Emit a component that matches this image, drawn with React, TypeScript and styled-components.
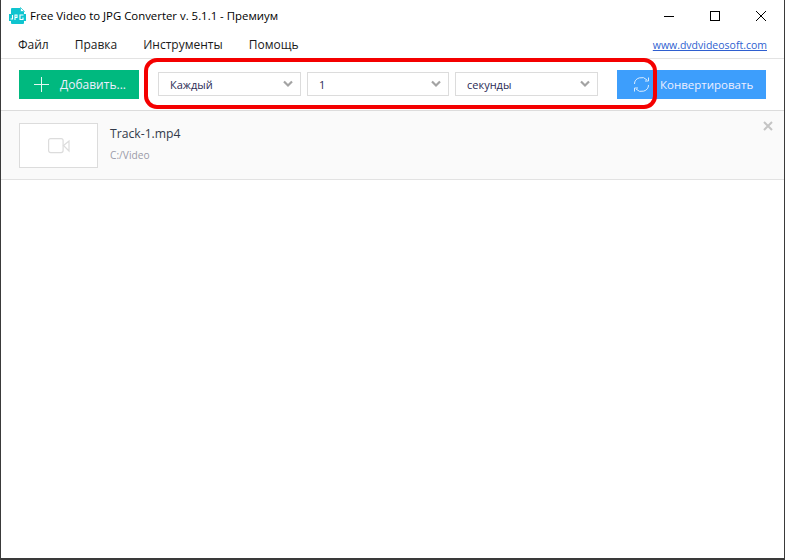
import React from "react";
import styled, { createGlobalStyle } from "styled-components";

const Global = createGlobalStyle`
  html, body { margin: 0; padding: 0; background: #fff; }
  body { font-family: "Open Sans", "Noto Sans", sans-serif; }
`;

const Window = styled.div`
  position: relative;
  box-sizing: border-box;
  width: 785px;
  height: 560px;
  border: solid #3a3a3a;
  border-width: 0 1px 2px 1px;
  background: #fff;
  overflow: hidden;
`;

const TitleBar = styled.div`
  display: flex;
  align-items: center;
  height: 31px;
  padding-left: 8px;
`;

const TitleText = styled.div`
  margin-left: 4px;
  font-size: 11.4px;
  color: #000;
  flex: 1;
  white-space: nowrap;
`;

const WinButton = styled.div`
  width: 46px;
  height: 31px;
  display: flex;
  align-items: center;
  justify-content: center;
`;

const MenuBar = styled.div`
  display: flex;
  align-items: center;
  height: 27px;
  padding: 0 17px;
  gap: 26px;
`;

const MenuItem = styled.span`
  font-size: 12px;
  color: #1a1a1a;
`;

const SiteLink = styled.a`
  margin-left: auto;
  font-size: 10.5px;
  color: #2f5fd0;
  text-decoration: underline;
`;

const Toolbar = styled.div`
  display: flex;
  align-items: center;
  height: 53px;
  box-sizing: border-box;
  border-top: 1px solid #e3e3e3;
  border-bottom: 1px solid #dcdcdc;
  padding: 0 18px;
`;

const ActionButton = styled.div<{ $bg: string; $w: number; $fs: number }>`
  display: flex;
  align-items: center;
  box-sizing: border-box;
  width: ${(p) => p.$w}px;
  height: 29px;
  background: ${(p) => p.$bg};
  color: #eef;
  font-size: ${(p) => p.$fs}px;
  white-space: nowrap;
`;

const GreenInner = styled.span`
  display: flex;
  align-items: center;
  gap: 10px;
  padding-left: 14px;
`;

const BlueInner = styled.span`
  display: flex;
  align-items: center;
  gap: 10px;
  padding-left: 16px;
`;

const Selects = styled.div`
  display: flex;
  gap: 6px;
  margin: 0 19px 1px;
`;

const Select = styled.div<{ $w: number }>`
  display: flex;
  align-items: center;
  justify-content: space-between;
  box-sizing: border-box;
  width: ${(p) => p.$w}px;
  height: 24px;
  border: 1px solid #dcdcdc;
  padding: 0 7px 0 11px;
  font-size: 11px;
  color: #2b2b55;
`;

const Row = styled.div`
  display: flex;
  position: relative;
  height: 69px;
  box-sizing: border-box;
  background: #fafafa;
  border-bottom: 1px solid #e2e2e2;
  padding: 12px 18px;
`;

const Thumb = styled.div`
  display: flex;
  align-items: center;
  justify-content: center;
  box-sizing: border-box;
  width: 79px;
  height: 45px;
  background: #fff;
  border: 1px solid #dcdcdc;
`;

const Info = styled.div`
  margin-left: 12px;
  display: flex;
  flex-direction: column;
`;

const FileName = styled.div`
  font-size: 12.2px;
  color: #333a4a;
  line-height: 18px;
  margin-top: 2px;
`;

const FilePath = styled.div`
  font-size: 10.2px;
  color: #9a9aa8;
  line-height: 14px;
  margin-top: 5px;
`;

const Close = styled.div`
  position: absolute;
  right: 11px;
  top: 10px;
  width: 10px;
  height: 10px;
  display: flex;
`;

const Highlight = styled.div`
  position: absolute;
  left: 143px;
  top: 58px;
  width: 513px;
  height: 51px;
  box-sizing: border-box;
  border: 4px solid #f40000;
  border-radius: 13px;
  pointer-events: none;
`;

const Chevron = () => (
  <svg width="10" height="8" viewBox="0 0 10 8">
    <path d="M1 1.5 L5 5.5 L9 1.5" fill="none" stroke="#a3a3a3" strokeWidth="2.2" />
  </svg>
);

const Logo = () => (
  <svg width="17" height="18" viewBox="0 0 17 18">
    <path d="M3 1 H11 L15 5 V16 Q15 17 14 17 H3 Q2 17 2 16 V1.5 Z" fill="#0fc4cf" />
    <path d="M11.5 0.5 L15.5 4.5 H11.5 Z" fill="#fff" stroke="#0fc4cf" strokeWidth="0.7" />
    <rect x="0" y="7" width="17" height="7" fill="#0fc4cf" />
    <path d="M3.5 8 V12 H1.5 M6 13 V8 H8 V10.5 H6 M14.5 8 H11 V12.5 H14 V10.5" fill="none" stroke="#fff" strokeWidth="1.1" />
  </svg>
);

export default function App() {
  return (
    <Window>
      <Global />
      <TitleBar>
        <Logo />
        <TitleText>Free Video to JPG Converter v. 5.1.1 - Премиум</TitleText>
        <WinButton>
          <svg width="10" height="10" viewBox="0 0 10 10"><path d="M0 5.5 H10" stroke="#000" /></svg>
        </WinButton>
        <WinButton>
          <svg width="10" height="10" viewBox="0 0 10 10"><rect x="0.5" y="0.5" width="9" height="9" fill="none" stroke="#000" /></svg>
        </WinButton>
        <WinButton>
          <svg width="10" height="10" viewBox="0 0 10 10"><path d="M0 0 L10 10 M10 0 L0 10" stroke="#000" /></svg>
        </WinButton>
      </TitleBar>
      <MenuBar>
        <MenuItem>Файл</MenuItem>
        <MenuItem>Правка</MenuItem>
        <MenuItem>Инструменты</MenuItem>
        <MenuItem>Помощь</MenuItem>
        <SiteLink>www.dvdvideosoft.com</SiteLink>
      </MenuBar>
      <Toolbar>
        <ActionButton $bg="#00b97f" $w={120} $fs={12}>
          <GreenInner>
            <svg width="17" height="17" viewBox="0 0 17 17"><path d="M8.5 1 V16 M1 8.5 H16" stroke="#e6f8f2" strokeWidth="1" /></svg>
            Добавить...
          </GreenInner>
        </ActionButton>
        <Selects>
          <Select $w={143}>Каждый<Chevron /></Select>
          <Select $w={142}>1<Chevron /></Select>
          <Select $w={143}>секунды<Chevron /></Select>
        </Selects>
        <ActionButton $bg="#3d9efc" $w={149} $fs={11.5}>
          <BlueInner>
            <svg width="17" height="17" viewBox="0 0 17 17" fill="none" stroke="#d9ecff" strokeWidth="1">
              <path d="M1.5 8 A7 6.5 0 0 1 14 4" />
              <path d="M15.5 1.5 V5 H12" />
              <path d="M15.5 9 A7 6.5 0 0 1 3 13" />
              <path d="M1.5 15.5 V12 H5" />
            </svg>
            Конвертировать
          </BlueInner>
        </ActionButton>
      </Toolbar>
      <Row>
        <Thumb>
          <svg width="22" height="16" viewBox="0 0 22 16" fill="none" stroke="#dcdcdc" strokeWidth="1.2">
            <rect x="0.6" y="0.6" width="14.5" height="14" rx="2" />
            <path d="M15.5 7.5 L21 3 V13 Z" />
          </svg>
        </Thumb>
        <Info>
          <FileName>Track-1.mp4</FileName>
          <FilePath>C:/Video</FilePath>
        </Info>
        <Close>
          <svg width="10" height="10" viewBox="0 0 10 10"><path d="M1 1 L9 9 M9 1 L1 9" stroke="#c4c4c4" strokeWidth="2" /></svg>
        </Close>
      </Row>
      <Highlight />
    </Window>
  );
}
